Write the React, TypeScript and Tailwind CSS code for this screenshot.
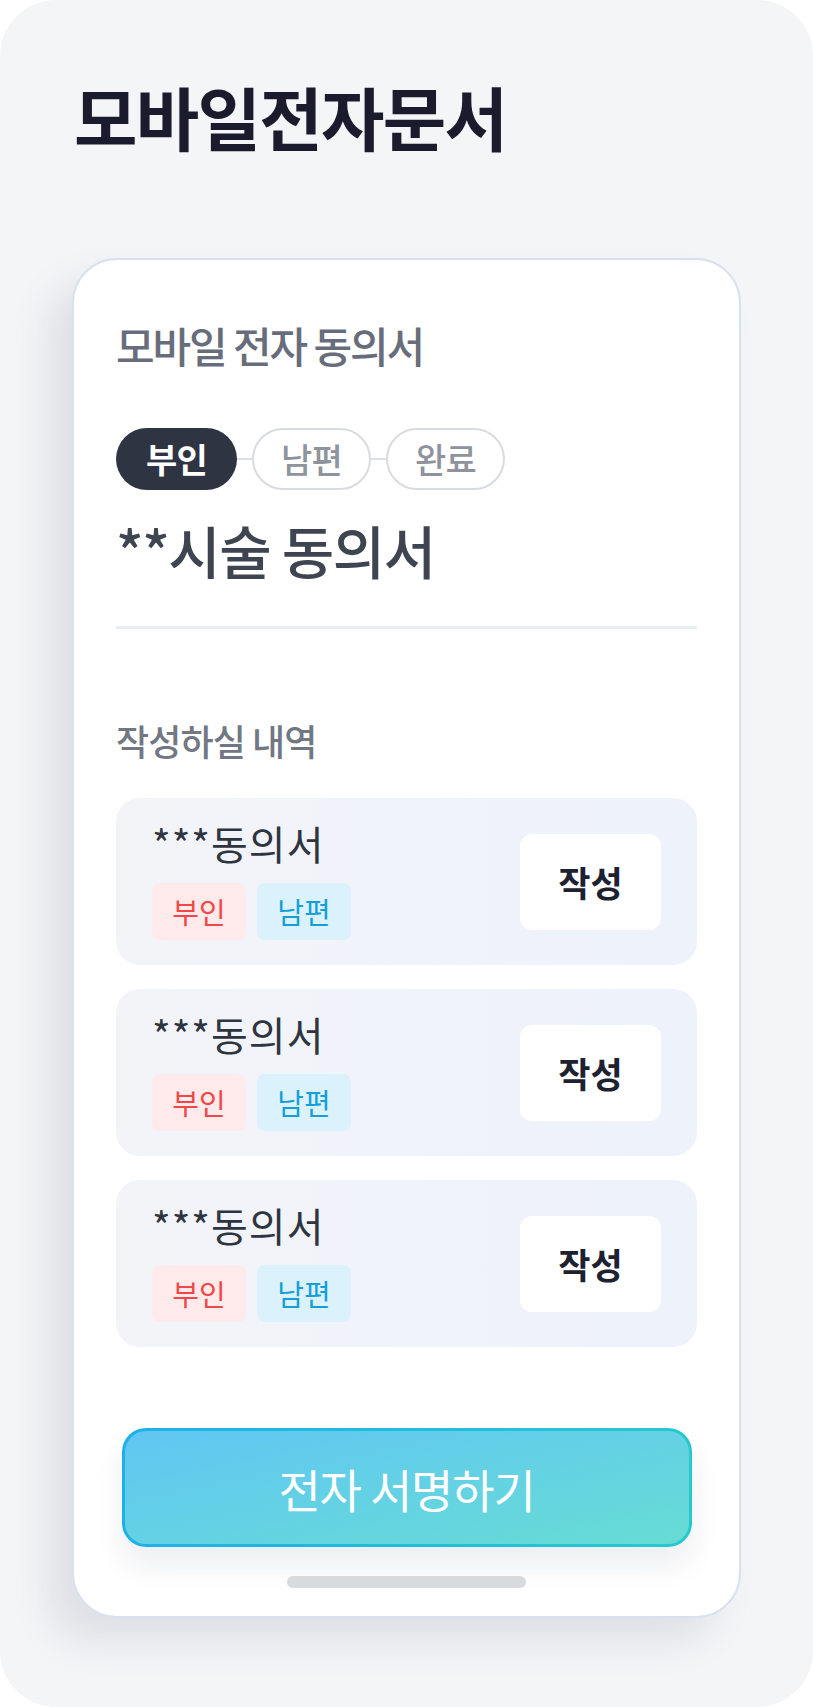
import React from "react";

const STEPS = ["부인", "남편", "완료"];
const DOCS = ["***동의서", "***동의서", "***동의서"];

function StepPills() {
  return (
    <div className="flex items-center">
      {STEPS.map((s, i) => (
        <React.Fragment key={s}>
          {i > 0 && <div className="h-[2px] w-[15px] bg-[#dcdfe4]" />}
          <div
            className={
              i === 0
                ? "flex h-[62px] w-[121px] items-center justify-center rounded-full bg-[#2e3441] text-[34px] font-bold leading-none tracking-tight text-white"
                : "flex h-[62px] w-[119px] items-center justify-center rounded-full border-2 border-[#d8dbe0] bg-white text-[34px] font-medium leading-none tracking-tight text-[#8e939c]"
            }
          >
            {s}
          </div>
        </React.Fragment>
      ))}
    </div>
  );
}

function DocRow({ title }: { title: string }) {
  return (
    <div className="flex h-[167px] items-center justify-between rounded-[24px] bg-gradient-to-r from-[#f2f4f8] to-[#eef2fb] pl-[36px] pr-[36px]">
      <div className="flex flex-col">
        <div className="text-[40px] leading-none tracking-wide text-[#2f3441]">{title}</div>
        <div className="mt-[20px] flex gap-[11px]">
          <span className="flex h-[57px] w-[94px] items-center justify-center rounded-[8px] bg-[#feeaea] text-[29px] leading-none text-[#f04848]">
            부인
          </span>
          <span className="flex h-[57px] w-[94px] items-center justify-center rounded-[8px] bg-[#dbf2fd] text-[29px] leading-none text-[#149fd9]">
            남편
          </span>
        </div>
      </div>
      <button className="flex h-[96px] w-[141px] items-center justify-center rounded-[12px] bg-white text-[35px] font-bold leading-none text-[#1e2130]">
        작성
      </button>
    </div>
  );
}

export default function App() {
  return (
    <div className="min-h-[1707px] w-[813px] bg-white font-['Noto_Sans_CJK_KR','Noto_Sans',sans-serif]">
      <div className="h-[1707px] w-[813px] overflow-hidden rounded-[56px] bg-[#f4f5f7] pt-[82px]">
        <h1 className="pl-[74px] text-[69px] font-bold leading-none tracking-tight text-[#1a1b2c]">
          모바일전자문서
        </h1>

        <div className="mx-[72px] mt-[107px] flex h-[1360px] flex-col rounded-[45px] border-2 border-[#d7e1ef] bg-white px-[42px] pt-[64px] shadow-[-24px_24px_38px_rgba(40,50,90,0.1)]">
          <div className="text-[42px] font-medium leading-none tracking-[-0.05em] text-[#676d7a]">
            모바일 전자 동의서
          </div>

          <div className="mt-[62px]">
            <StepPills />
          </div>

          <div className="mt-[31px] text-[57px] font-medium leading-none tracking-tight text-[#3f4451]">
            **시술 동의서
          </div>

          <div className="mt-[48px] h-[3px] w-full bg-[#e8edf4]" />

          <div className="mt-[93px] text-[36px] font-medium leading-none tracking-tight text-[#727784]">
            작성하실 내역
          </div>

          <div className="mt-[40px] flex flex-col gap-[24px]">
            {DOCS.map((d, i) => (
              <DocRow key={i} title={d} />
            ))}
          </div>

          <div className="mx-auto mt-[81px] w-[570px] rounded-[24px] bg-gradient-to-r from-[#1fb0e8] to-[#27c9cf] p-[3px] shadow-[0_18px_30px_rgba(30,40,80,0.08)]">
            <div className="flex h-[113px] items-center justify-center rounded-[21px] bg-gradient-to-br from-[#61c6f3] to-[#67dcd4] text-[46px] leading-none tracking-tight text-white">
              전자 서명하기
            </div>
          </div>

          <div className="mx-auto mt-[29px] h-[12px] w-[239px] rounded-full bg-[#d9dadd]" />
        </div>
      </div>
    </div>
  );
}
